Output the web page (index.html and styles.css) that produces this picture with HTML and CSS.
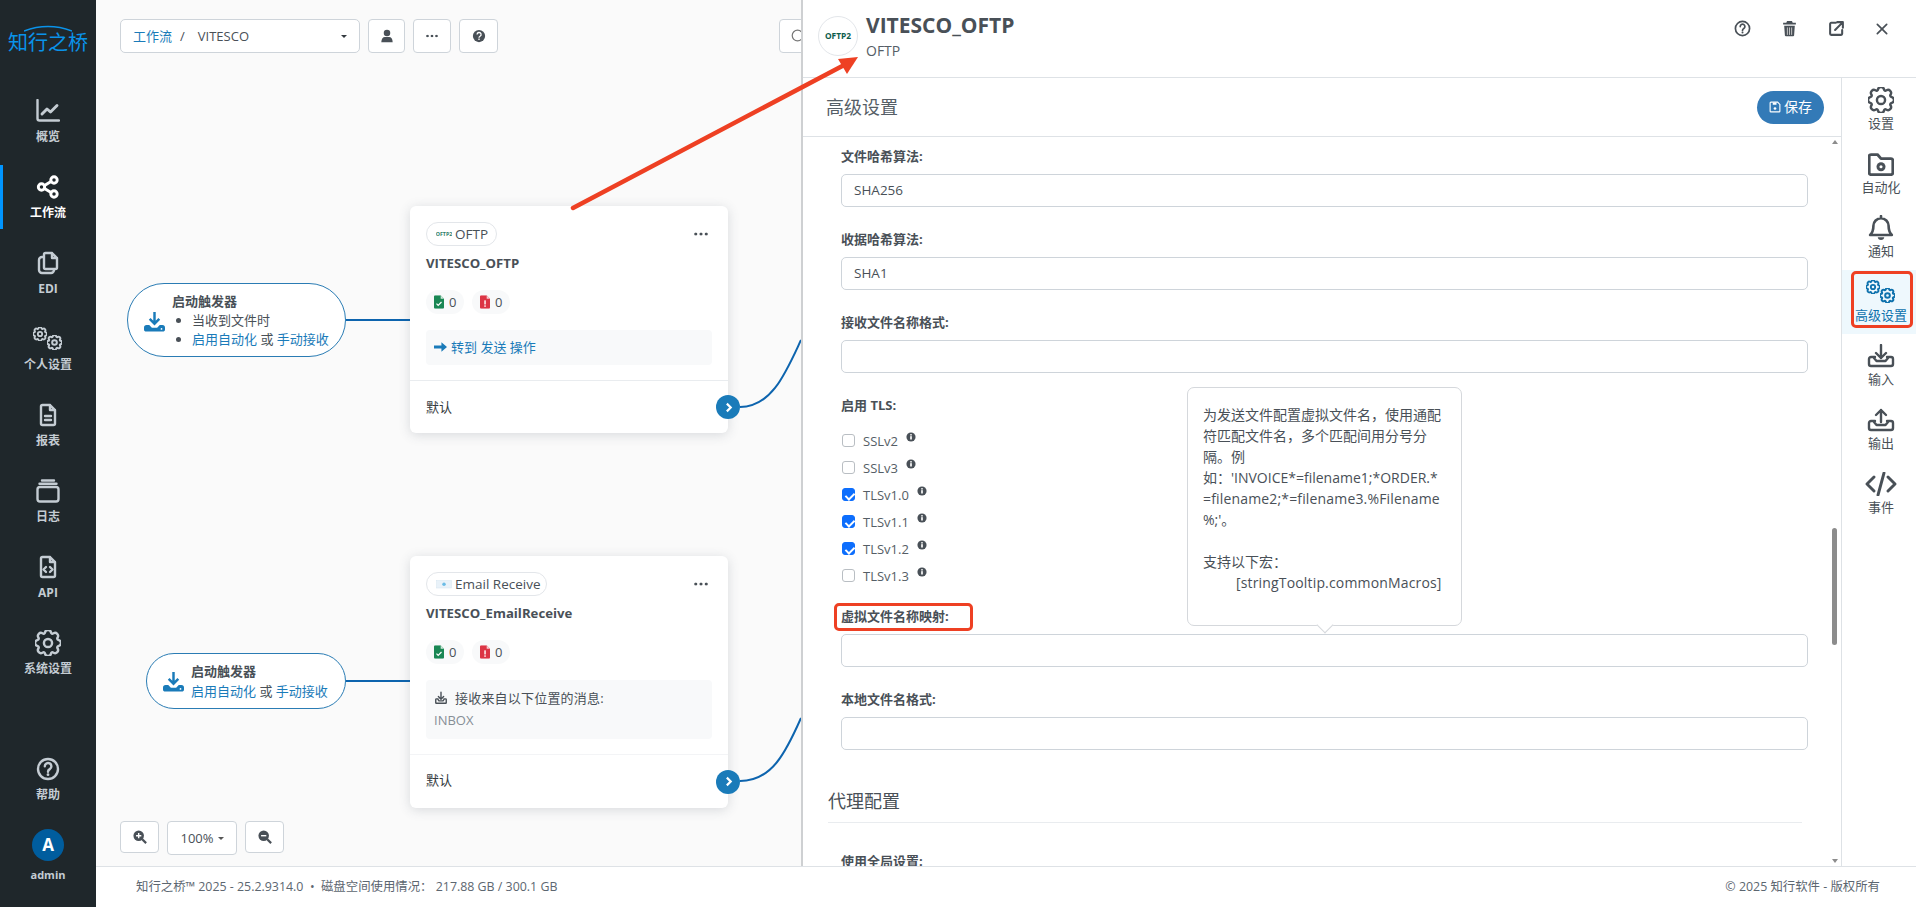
FILE: index.html
```html
<!DOCTYPE html>
<html lang="zh">
<head>
<meta charset="utf-8">
<title>工作流 - VITESCO</title>
<link rel="stylesheet" href="styles.css">
</head>
<body>
<svg class="defs" aria-hidden="true">
  <symbol id="gear" viewBox="0 0 16 16"><path class="st" d="M9.796 1.343c-.527-1.79-3.065-1.79-3.592 0l-.094.319a.873.873 0 0 1-1.255.52l-.292-.16c-1.64-.892-3.433.902-2.54 2.541l.159.292a.873.873 0 0 1-.52 1.255l-.319.094c-1.79.527-1.79 3.065 0 3.592l.319.094a.873.873 0 0 1 .52 1.255l-.16.292c-.892 1.64.901 3.434 2.541 2.54l.292-.159a.873.873 0 0 1 1.255.52l.094.319c.527 1.79 3.065 1.79 3.592 0l.094-.319a.873.873 0 0 1 1.255-.52l.292.16c1.64.893 3.434-.902 2.54-2.541l-.159-.292a.873.873 0 0 1 .52-1.255l.319-.094c1.79-.527 1.79-3.065 0-3.592l-.319-.094a.873.873 0 0 1-.52-1.255l.16-.292c.893-1.64-.902-3.433-2.541-2.54l-.292.159a.873.873 0 0 1-1.255-.52l-.094-.319z"/><circle class="st" cx="8" cy="8" r="2.5"/></symbol>
  <symbol id="gears" viewBox="0 0 32 25"><use href="#gear" x="1" y="1" width="14" height="14"/><use href="#gear" x="15" y="9" width="15" height="15"/></symbol>
  <symbol id="tray" viewBox="0 0 24 24"><path class="st2" d="M7 13.500H4.200A1.200 1.200 0 0 0 3 14.700V20a1 1 0 0 0 1 1h16a1 1 0 0 0 1-1v-5.300a1.200 1.200 0 0 0-1.200-1.200H17M6.500 14l2 3h7l2-3"/></symbol>
  <symbol id="tray-wide" viewBox="0 0 28 24"><path class="st2" d="M8 13H4a2 2 0 0 0-2 2v5a2 2 0 0 0 2 2h20a2 2 0 0 0 2-2v-5a2 2 0 0 0-2-2h-4M7 14l2.500 3h9l2.500-3"/></symbol>
  <symbol id="doc" viewBox="0 0 24 24"><path class="st2" d="M14 2H6.500A1.500 1.500 0 0 0 5 3.500v17A1.500 1.500 0 0 0 6.500 22h11a1.500 1.500 0 0 0 1.500-1.500V7zM14 2v5h5"/></symbol>
  <symbol id="q" viewBox="0 0 24 24"><circle class="st2" cx="12" cy="12" r="10"/><path class="st2" d="M8.800 9.300a3.300 3.300 0 1 1 5 2.800c-1.200.7-1.800 1.300-1.800 2.600"/><circle cx="12" cy="17.700" r="1.400" fill="currentColor"/></symbol>
  <symbol id="info" viewBox="0 0 12 12"><circle cx="6" cy="6" r="5.500" fill="#495057"/><rect x="5" y="5" width="2" height="4" fill="#fff"/><rect x="5" y="2.600" width="2" height="1.600" fill="#fff"/></symbol>
  <symbol id="trig" viewBox="0 0 24 24"><path d="M12 1v13M6.500 9l5.500 5.500L17.500 9" fill="none" stroke="currentColor" stroke-width="2.800"/><path d="M0 19c0-2 1-3 3-3h3l3 3h6l3-3h3c2 0 3 1 3 3v2c0 1.500-1 2.500-2.500 2.500h-19C1 23.500 0 22.500 0 21z" fill="currentColor"/><circle cx="20" cy="20.500" r="1" fill="#fff"/></symbol>
  <symbol id="okdoc" viewBox="0 0 12 16"><path d="M1.500 0H8l4 4v10.500a1.500 1.500 0 0 1-1.500 1.500h-9A1.500 1.500 0 0 1 0 14.500v-13A1.500 1.500 0 0 1 1.500 0z" fill="#1a8754"/><path d="M8 0v4h4" fill="#cfe8db"/><path d="M3 10l2 2 4-4" fill="none" stroke="#fff" stroke-width="1.500"/></symbol>
  <symbol id="errdoc" viewBox="0 0 12 16"><path d="M1.500 0H8l4 4v10.500a1.500 1.500 0 0 1-1.500 1.500h-9A1.500 1.500 0 0 1 0 14.500v-13A1.500 1.500 0 0 1 1.500 0z" fill="#dc3545"/><path d="M8 0v4h4" fill="#f6ccd0"/><rect x="5.200" y="6" width="1.700" height="5" fill="#fff"/><rect x="5.200" y="12" width="1.700" height="1.800" fill="#fff"/></symbol>
  <symbol id="dots" viewBox="0 0 16 4"><circle cx="2" cy="2" r="1.800" fill="currentColor"/><circle cx="8" cy="2" r="1.800" fill="currentColor"/><circle cx="14" cy="2" r="1.800" fill="currentColor"/></symbol>
</svg>

<aside class="sidebar">
  <div class="logo">
    <svg class="logo-arc" viewBox="0 0 48 7"><path d="M0 6Q24-3 48 6" fill="none" stroke="currentColor" stroke-width="1.600"/></svg>
    <span class="logo-text">知行之桥</span>
  </div>
  <nav class="nav">
    <a class="nav-item"><svg class="nav-ic" viewBox="0 0 24 24"><path class="st2" d="M1.500 1v18.500a2 2 0 0 0 2 2H23" /><path class="st3" d="M6 15l5-5 3.500 3L21 6.500"/></svg><span>概览</span></a>
    <a class="nav-item active"><svg class="nav-ic" viewBox="0 0 24 24"><g class="st3"><circle cx="5.500" cy="12" r="3.200"/><circle cx="18" cy="5" r="3.200"/><circle cx="18" cy="19" r="3.200"/><path d="M8.500 10.500l6.500-4M8.500 13.500l6.500 4"/></g></svg><span>工作流</span></a>
    <a class="nav-item"><svg class="nav-ic" viewBox="0 0 24 24"><path class="st2" d="M8 3.500A1.500 1.500 0 0 1 9.500 2H16l5 5v9.500a1.500 1.500 0 0 1-1.500 1.500h-10A1.500 1.500 0 0 1 8 16.500zM16 2v5h5M8 6H6a3 3 0 0 0-3 3v10a3 3 0 0 0 3 3h9a3 3 0 0 0 3-3v-1"/></svg><span>EDI</span></a>
    <a class="nav-item"><svg class="nav-ic wide" viewBox="0 0 32 25"><use href="#gears"/></svg><span>个人设置</span></a>
    <a class="nav-item"><svg class="nav-ic" viewBox="0 0 24 24"><use href="#doc"/><path class="st2" d="M9 13h6M9 17h6"/></svg><span>报表</span></a>
    <a class="nav-item"><svg class="nav-ic" viewBox="0 0 24 24"><rect class="st2" x="1.500" y="8" width="21" height="14.500" rx="2.500"/><path class="st2" d="M3.500 4.800h17M6 1.500h12"/></svg><span>日志</span></a>
    <a class="nav-item"><svg class="nav-ic" viewBox="0 0 24 24"><use href="#doc"/><path class="st2" d="M10 12l-2.500 2.500L10 17M14 12l2.500 2.500L14 17"/></svg><span>API</span></a>
    <a class="nav-item"><svg class="nav-ic solo-gear" viewBox="0 0 16 16"><use href="#gear"/></svg><span>系统设置</span></a>
  </nav>
  <div class="nav-bottom">
    <a class="nav-item"><svg class="nav-ic" viewBox="0 0 24 24"><use href="#q"/></svg><span>帮助</span></a>
    <div class="user"><span class="avatar">A</span><span class="user-name">admin</span></div>
  </div>
</aside>

<div class="main">
  <section class="canvas">
    <svg class="wires" viewBox="0 0 705 866">
      <path d="M250 320H314M250 681H314M644 407C676 407 690 372 705 340M644 781C676 781 690 752 705 718"/>
    </svg>

    <header class="toolbar">
      <div class="crumb"><a class="link">工作流</a><span class="sep">/</span><span>VITESCO</span><i class="caret"></i></div>
      <button class="tbtn w37"><svg class="ic16" viewBox="0 0 16 16"><circle cx="8" cy="4.500" r="3.700" fill="currentColor"/><path d="M1.500 15c0-4 2-6 4-6h5c2 0 4 2 4 6z" fill="currentColor"/></svg></button>
      <button class="tbtn w38"><svg class="ic-dots" viewBox="0 0 16 4"><use href="#dots"/></svg></button>
      <button class="tbtn w39"><svg class="ic16" viewBox="0 0 16 16"><circle cx="8" cy="8" r="7" fill="currentColor"/><path d="M5.800 6.300a2.300 2.300 0 1 1 3.400 2c-.8.500-1.200.8-1.200 1.700" fill="none" stroke="#fff" stroke-width="1.500"/><rect x="7.200" y="10.900" width="1.600" height="1.600" fill="#fff"/></svg></button>
      <div class="search"><svg class="search-ic" viewBox="0 0 16 16"><circle cx="7" cy="7" r="5.700" fill="none" stroke="currentColor" stroke-width="1.300"/><path d="M11.500 11.500L15 15" stroke="currentColor" stroke-width="1.300"/></svg></div>
    </header>

    <div class="zoombar">
      <button class="zbtn"><svg class="ic16" viewBox="0 0 16 16"><circle cx="6.500" cy="6.500" r="6" fill="currentColor"/><path d="M10.500 10.500L15 15" stroke="currentColor" stroke-width="2.500"/><path d="M3.500 6.500h6M6.500 3.500v6" stroke="#fff" stroke-width="1.600"/></svg></button>
      <button class="zbtn pct">100%<i class="caret small"></i></button>
      <button class="zbtn"><svg class="ic16" viewBox="0 0 16 16"><circle cx="6.500" cy="6.500" r="6" fill="currentColor"/><path d="M10.500 10.500L15 15" stroke="currentColor" stroke-width="2.500"/><path d="M3.500 6.500h6" stroke="#fff" stroke-width="1.600"/></svg></button>
    </div>

    <div class="trigger t1">
      <svg class="trig-ic" viewBox="0 0 24 24"><use href="#trig"/></svg>
      <div class="trig-body">
        <div class="trig-title">启动触发器</div>
        <ul class="trig-list">
          <li>当收到文件时</li>
          <li><a class="link">启用自动化</a> 或 <a class="link">手动接收</a></li>
        </ul>
      </div>
    </div>

    <div class="trigger t2">
      <svg class="trig-ic" viewBox="0 0 24 24"><use href="#trig"/></svg>
      <div class="trig-body">
        <div class="trig-title">启动触发器</div>
        <div class="trig-line"><a class="link">启用自动化</a> 或 <a class="link">手动接收</a></div>
      </div>
    </div>

    <article class="card c1">
      <div class="card-main">
        <div class="card-top">
          <span class="badge"><svg class="badge-ic" viewBox="0 0 24 10"><text x="12" y="7.500" text-anchor="middle" class="oftp-small">OFTP2</text></svg>OFTP</span>
          <svg class="card-dots" viewBox="0 0 16 4"><use href="#dots"/></svg>
        </div>
        <div class="card-title">VITESCO_OFTP</div>
        <div class="pills">
          <span class="pill"><svg class="pill-ic" viewBox="0 0 12 16"><use href="#okdoc"/></svg>0</span>
          <span class="pill"><svg class="pill-ic" viewBox="0 0 12 16"><use href="#errdoc"/></svg>0</span>
        </div>
        <div class="card-box goto"><svg class="goto-ic" viewBox="0 0 14 10"><path d="M0 3.500h8V0l6 5-6 5V6.500H0z" fill="currentColor"/></svg><a class="link">转到 发送 操作</a></div>
      </div>
      <div class="card-foot">默认<span class="port"><svg viewBox="0 0 10 10"><path d="M3.500 1.500L7 5l-3.500 3.500" fill="none" stroke="#fff" stroke-width="2"/></svg></span></div>
    </article>

    <article class="card c2">
      <div class="card-main">
        <div class="card-top">
          <span class="badge"><svg class="badge-ic" viewBox="0 0 24 14"><rect x="1" y="2" width="22" height="11" fill="#e9f2f9" stroke="#d4e4f0" stroke-width=".8"/><circle cx="12" cy="7.500" r="2.600" fill="#6bbce6"/></svg>Email Receive</span>
          <svg class="card-dots" viewBox="0 0 16 4"><use href="#dots"/></svg>
        </div>
        <div class="card-title">VITESCO_EmailReceive</div>
        <div class="pills">
          <span class="pill"><svg class="pill-ic" viewBox="0 0 12 16"><use href="#okdoc"/></svg>0</span>
          <span class="pill"><svg class="pill-ic" viewBox="0 0 12 16"><use href="#errdoc"/></svg>0</span>
        </div>
        <div class="card-box inbox">
          <div class="inbox-head"><svg class="inbox-ic" viewBox="0 0 24 24"><use href="#tray"/><path class="st2" d="M12 2v12M7.500 9.500L12 14l4.500-4.500"/></svg>接收来自以下位置的消息:</div>
          <div class="inbox-name">INBOX</div>
        </div>
      </div>
      <div class="card-foot">默认<span class="port"><svg viewBox="0 0 10 10"><path d="M3.500 1.500L7 5l-3.500 3.500" fill="none" stroke="#fff" stroke-width="2"/></svg></span></div>
    </article>
  </section>

  <footer class="footer">
    <span>知行之桥™ 2025 - 25.2.9314.0 &nbsp;•&nbsp; 磁盘空间使用情况： 217.88 GB / 300.1 GB</span>
    <span>© 2025 知行软件 - 版权所有</span>
  </footer>
</div>

<section class="panel">
  <header class="panel-head">
    <span class="panel-logo"><svg viewBox="0 0 30 12"><text x="15" y="9.500" text-anchor="middle" class="oftp-big">OFTP2</text></svg></span>
    <div class="panel-names">
      <h1>VITESCO_OFTP</h1>
      <p>OFTP</p>
    </div>
    <div class="panel-actions">
      <svg class="act" viewBox="0 0 24 24"><use href="#q"/></svg>
      <svg class="act" viewBox="0 0 24 24"><path d="M8.500 1.500h7l1 2.500H21v2.500H3V4h4.500z M4.500 8h15l-1 14a1.500 1.500 0 0 1-1.500 1H7a1.500 1.500 0 0 1-1.500-1z" fill="currentColor"/><path d="M9 10.500V21M12 10.500V21M15 10.500V21" stroke="#d8d8d8" stroke-width="1.200"/></svg>
      <svg class="act" viewBox="0 0 24 24"><path class="st3" d="M11 4H4.500A1.500 1.500 0 0 0 3 5.500v14A1.500 1.500 0 0 0 4.500 21h14a1.500 1.500 0 0 0 1.500-1.500V14M13 3h8v8M21 3L10 14"/></svg>
      <svg class="act x" viewBox="0 0 24 24"><path class="st3" d="M4 4l16 16M20 4L4 20"/></svg>
    </div>
  </header>
  <div class="panel-body">
    <div class="panel-content">
      <div class="section-head">
        <h2>高级设置</h2>
        <button class="save"><svg class="save-ic" viewBox="0 0 16 16"><path d="M2.500 1.500h9l3 3v9a1 1 0 0 1-1 1h-11a1 1 0 0 1-1-1v-11a1 1 0 0 1 1-1z" fill="none" stroke="#fff" stroke-width="1.500"/><rect x="5" y="2" width="5" height="3" fill="#fff"/><circle cx="8" cy="10" r="1.800" fill="#fff"/></svg>保存</button>
      </div>
      <div class="form-wrap">
        <form class="form">
          <label class="lbl">文件哈希算法:</label>
          <div class="input">SHA256</div>
          <label class="lbl">收据哈希算法:</label>
          <div class="input">SHA1</div>
          <label class="lbl">接收文件名称格式:</label>
          <div class="input"></div>
          <label class="lbl lbl-tls">启用 TLS:</label>
          <div class="checks">
            <label class="check"><input type="checkbox"><span>SSLv2</span><svg class="info" viewBox="0 0 12 12"><use href="#info"/></svg></label>
            <label class="check"><input type="checkbox"><span>SSLv3</span><svg class="info" viewBox="0 0 12 12"><use href="#info"/></svg></label>
            <label class="check"><input type="checkbox" checked><span>TLSv1.0</span><svg class="info" viewBox="0 0 12 12"><use href="#info"/></svg></label>
            <label class="check"><input type="checkbox" checked><span>TLSv1.1</span><svg class="info" viewBox="0 0 12 12"><use href="#info"/></svg></label>
            <label class="check"><input type="checkbox" checked><span>TLSv1.2</span><svg class="info" viewBox="0 0 12 12"><use href="#info"/></svg></label>
            <label class="check"><input type="checkbox"><span>TLSv1.3</span><svg class="info" viewBox="0 0 12 12"><use href="#info"/></svg></label>
          </div>
          <label class="lbl">虚拟文件名称映射:</label>
          <div class="input"></div>
          <label class="lbl">本地文件名格式:</label>
          <div class="input"></div>
          <h3 class="subhead">代理配置</h3>
          <label class="lbl lbl-last">使用全局设置:</label>
        </form>
        <div class="tooltip">为发送文件配置虚拟文件名，使用通配<br>符匹配文件名，多个匹配间用分号分<br>隔。例<br>如：'INVOICE*=filename1;*ORDER.*<br><span class="tip-wide">=filename2;*=filename3.%Filename</span><br>%;'。<br><br>支持以下宏：<br><span class="macro">[stringTooltip.commonMacros]</span></div>
        <div class="scrollbar"><i class="sb-up"></i><i class="sb-thumb"></i><i class="sb-down"></i></div>
      </div>
    </div>
    <nav class="rail">
      <a class="rail-item"><svg class="rail-ic solo-gear" viewBox="0 0 16 16"><use href="#gear"/></svg><span>设置</span></a>
      <a class="rail-item"><svg class="rail-ic folder" viewBox="1 2 22 20"><path class="st2" d="M2 5.500A1.500 1.500 0 0 1 3.500 4H9l3 3.500h8.500A1.500 1.500 0 0 1 22 9v10.500a1.500 1.500 0 0 1-1.500 1.500h-17A1.500 1.500 0 0 1 2 19.500z"/><circle cx="12" cy="14.300" r="3.800" fill="currentColor"/><circle cx="12" cy="14.300" r="1.300" fill="#fff"/></svg><span>自动化</span></a>
      <a class="rail-item"><svg class="rail-ic bell" viewBox="0 0 24 24"><path class="st2" d="M12 3a7 7 0 0 0-7 7c0 5-1.500 7-3 8.500h20C20.500 17 19 15 19 10a7 7 0 0 0-7-7zM12 3V1"/><path d="M9 20.500h6c0 1.500-1.300 2.500-3 2.500s-3-1-3-2.500z" fill="currentColor"/></svg><span>通知</span></a>
      <a class="rail-item active"><svg class="rail-ic wide" viewBox="0 0 32 25"><use href="#gears"/></svg><span>高级设置</span></a>
      <a class="rail-item"><svg class="rail-ic tray" viewBox="0 0 28 24"><use href="#tray-wide"/><path class="st2" d="M14 1v13M9 9l5 5 5-5"/></svg><span>输入</span></a>
      <a class="rail-item"><svg class="rail-ic tray" viewBox="0 0 28 24"><use href="#tray-wide"/><path class="st2" d="M14 14V2M9 7l5-5 5 5"/></svg><span>输出</span></a>
      <a class="rail-item"><svg class="rail-ic code" viewBox="0 0 32 24"><path class="st3" d="M9 5L2 12l7 7M23 5l7 7-7 7M19 1L13 23"/></svg><span>事件</span></a>
    </nav>
  </div>
</section>

<div class="mark mark-rail"></div>
<div class="mark mark-field"></div>
<svg class="arrow" viewBox="0 0 1916 907"><path d="M573 208L848 63" fill="none" stroke="#ee4023" stroke-width="4.500" stroke-linecap="round"/><path d="M858 57L838 59L847 74z" fill="#ee4023"/></svg>
</body>
</html>
```
FILE: styles.css
```css
* { box-sizing: border-box; }
html, body { margin: 0; height: 100%; }
body {
  display: flex;
  width: 1916px;
  height: 907px;
  overflow: hidden;
  position: relative;
  font-family: "Open Sans", "Noto Sans CJK SC", sans-serif;
  font-size: 13px;
  line-height: 18px;
  color: #495057;
  background: #fff;
}
a { text-decoration: none; color: inherit; }
h1, h2, h3, p { margin: 0; font-weight: normal; }
button { font: inherit; color: inherit; padding: 0; background: #fff; cursor: pointer; }
.defs { position: absolute; width: 0; height: 0; }
.st { fill: none; stroke: currentColor; stroke-width: var(--gw, 1.5); stroke-linejoin: round; }
.st2 { fill: none; stroke: currentColor; stroke-width: 2.400; stroke-linejoin: round; stroke-linecap: round; }
.st3 { fill: none; stroke: currentColor; stroke-width: 2.900; stroke-linejoin: round; stroke-linecap: round; }
.link { color: #1a7bb9; }

/* sidebar */
.sidebar {
  width: 96px;
  flex: none;
  background: #1f272b;
  display: flex;
  flex-direction: column;
  color: #c4ccd3;
}
.logo {
  height: 89px;
  position: relative;
  display: flex;
  justify-content: center;
  padding-top: 33px;
  color: #0a93ea;
}
.logo-text { font-size: 20px; line-height: 20px; letter-spacing: 0; }
.logo-arc { position: absolute; left: 24px; top: 25px; width: 48px; height: 7px; }
.nav { display: flex; flex-direction: column; gap: 12px; }
.nav-item {
  height: 64px;
  padding-top: 10px;
  display: flex;
  flex-direction: column;
  align-items: center;
  gap: 5px;
  font-size: 12px;
  font-weight: 700;
  line-height: 18px;
  position: relative;
}
.nav-item.active { color: #fff; box-shadow: inset 3px 0 0 #0095ff; }
.nav-ic { width: 24px; height: 24px; flex: none; }
.nav-ic.wide { width: 32px; height: 25px; margin-top: -1px; --gw: 2.100; }
.nav-ic.solo-gear, .rail-ic.solo-gear { width: 26px; height: 26px; margin: -1px 0; }
.nav-bottom { margin-top: auto; padding-bottom: 23px; display: flex; flex-direction: column; align-items: center; }
.nav-bottom .nav-item { align-self: stretch; }
.user { margin-top: 18px; display: flex; flex-direction: column; align-items: center; gap: 5px; }
.avatar {
  width: 32px; height: 32px; border-radius: 50%;
  background: #005d9e; color: #fff;
  font-weight: 700; font-size: 17px; line-height: 32px; text-align: center;
}
.user-name { font-size: 11px; font-weight: 700; line-height: 18px; }

/* main */
.main { flex: 1; display: flex; flex-direction: column; min-width: 0; }
.canvas {
  flex: 1;
  position: relative;
  background: #fafafa;
  padding: 19px 24px 11px;
  display: flex;
  flex-direction: column;
  overflow: hidden;
}
.wires { position: absolute; left: 0; top: 0; width: 705px; height: 866px; }
.wires path { fill: none; stroke: #0d64ae; stroke-width: 2; }
.toolbar { display: flex; gap: 8px; height: 34px; position: relative; }
.crumb {
  width: 240px;
  border: 1px solid #ced4da;
  border-radius: 5px;
  background: #fff;
  display: flex;
  align-items: center;
  padding: 0 12px;
  line-height: 30px;
  font-size: 13px;
}
.sep { margin: 0 13px 0 8px; }
.caret {
  margin-left: auto;
  border-top: 3px solid #343a40;
  border-left: 3px solid transparent;
  border-right: 3px solid transparent;
}
.caret.small { margin-left: 4px; border-width: 3px 3px 0; border-top-color: #555; display: inline-block; vertical-align: middle; }
.tbtn, .zbtn {
  border: 1px solid #ced4da;
  border-radius: 4px;
  display: flex;
  align-items: center;
  justify-content: center;
  color: #495057;
}
.w37 { width: 37px; } .w38 { width: 38px; } .w39 { width: 39px; }
.ic16 { width: 14px; height: 14px; }
.ic-dots { width: 12px; height: 4px; }
.search {
  width: 200px;
  margin-left: 273px;
  border: 1px solid #ced4da;
  border-radius: 4px;
  background: #fff;
  padding: 9px 0 0 11px;
  color: #777;
}
.search-ic { width: 15px; height: 15px; display: block; }
.zoombar { margin-top: auto; display: flex; gap: 8px; height: 34px; position: relative; align-items: flex-start; }
.zbtn { width: 39px; height: 32px; }
.zbtn.pct { width: 70px; height: 34px; font-size: 13px; gap: 0; }

/* canvas nodes */
.trigger {
  position: absolute;
  background: #fff;
  border: 1px solid #2a7cb4;
  border-radius: 40px;
  display: flex;
  align-items: center;
  color: #495057;
}
.t1 { left: 31px; top: 283px; width: 219px; height: 74px; padding-left: 16px; }
.t2 { left: 50px; top: 653px; width: 200px; height: 56px; padding-left: 16px; }
.trig-ic { width: 21px; height: 21px; color: #1a7bb9; flex: none; margin-right: 7px; margin-top: 2px; }
.t2 .trig-ic { margin-top: 0; }
.trig-title { font-weight: 700; line-height: 19px; color: #495057; }
.trig-list { margin: 0; padding: 0 0 0 20px; }
.trig-list li { line-height: 19px; }
.trig-line { line-height: 20px; }
.trig-body { font-size: 13px; }

.card {
  position: absolute;
  left: 314px;
  width: 318px;
  background: #fff;
  border-radius: 6px;
  box-shadow: 0 2px 12px rgba(60, 70, 90, .18);
  display: flex;
  flex-direction: column;
}
.c1 { top: 206px; height: 227px; }
.c2 { top: 556px; height: 252px; }
.card-main { padding: 16px 16px 15px; border-bottom: 1px solid #e9ecef; }
.c2 .card-main { border-bottom-color: #f3f4f6; }
.card-top { display: flex; justify-content: space-between; align-items: center; height: 24px; }
.badge {
  display: inline-flex;
  align-items: center;
  height: 24px;
  padding: 0 8px 0 9px;
  border: 1px solid #e3e6ea;
  border-radius: 12px;
  font-size: 13.500px;
  line-height: 22px;
  color: #495057;
  gap: 3px;
}
.c2 .badge { padding-right: 5px; }
.badge-ic { width: 16px; height: 10px; }
.oftp-small { font: 700 8px "Open Sans", sans-serif; fill: #2c7d68; }
.oftp-big { font: 700 9px "Open Sans", sans-serif; fill: #0d5c4c; }
.card-dots { width: 14px; height: 4px; color: #495057; margin-right: 4px; }
.card-title { font-weight: 700; font-size: 13.200px; line-height: 18px; margin-top: 8px; color: #495057; }
.pills { display: flex; gap: 8px; margin-top: 18px; }
.pill {
  width: 38px; height: 24px;
  border-radius: 12px;
  background: #f8f9fa;
  display: flex; align-items: center;
  padding-left: 8px;
  gap: 5px;
  font-size: 13px;
}
.pill-ic { width: 10px; height: 14px; }
.card-box { background: #f8f9fa; border-radius: 4px; margin-top: 16px; padding: 0 8px; }
.goto { height: 35px; display: flex; align-items: center; gap: 4px; color: #1a7bb9; padding-bottom: 1px; }
.goto-ic { width: 13px; height: 10px; }
.inbox { height: 59px; padding-top: 8px; }
.inbox-head { display: flex; align-items: center; gap: 7px; line-height: 20px; letter-spacing: .2px; }
.inbox-ic { width: 14px; height: 14px; }
.inbox-name { color: #868e96; line-height: 20px; margin-top: 2px; font-size: 13px; }
.card-foot { flex: 1; padding-left: 16px; display: flex; align-items: center; position: relative; color: #343a40; }
.c2 .card-foot { padding-bottom: 3px; }
.port {
  position: absolute;
  right: -12px; top: 50%;
  margin-top: -12px;
  width: 24px; height: 24px;
  border-radius: 50%;
  background: #1a7bb9;
  display: flex; align-items: center; justify-content: center;
}
.port svg { width: 11px; height: 11px; }

/* footer */
.footer {
  height: 41px;
  flex: none;
  border-top: 1px solid #dee2e6;
  background: #fff;
  display: flex;
  justify-content: space-between;
  align-items: center;
  padding: 0 36px 0 40px;
  font-size: 12.400px;
  color: #5c6670;
}

/* panel drawer */
.panel {
  position: absolute;
  left: 801px; top: 0; right: 0; bottom: 41px;
  background: #fff;
  border-left: 2px solid #ced0d2;
  display: flex;
  flex-direction: column;
}
.panel-head {
  height: 78px;
  flex: none;
  border-bottom: 1px solid #dee2e6;
  display: flex;
  align-items: flex-start;
  padding: 16px 0 0 15px;
}
.panel-logo {
  width: 40px; height: 40px;
  border: 1px solid #e3e6ea;
  border-radius: 50%;
  display: flex; align-items: center; justify-content: center;
  flex: none;
}
.panel-logo svg { width: 28px; height: 12px; }
.panel-names { margin-left: 8px; margin-top: -4px; }
.panel-names h1 { font-size: 21px; font-weight: 700; line-height: 26px; color: #495057; }
.panel-names p { font-size: 14px; line-height: 20px; margin-top: 3px; color: #555e66; }
.panel-actions { margin-left: auto; display: flex; gap: 30px; padding: 4px 27px 0 0; color: #495057; }
.act { width: 17px; height: 17px; }
.act.x { width: 14px; height: 14px; margin-top: 2px; }
.panel-body { flex: 1; display: flex; min-height: 0; }
.panel-content { flex: 1; display: flex; flex-direction: column; min-width: 0; }
.section-head {
  height: 59px;
  flex: none;
  border-bottom: 1px solid #dee2e6;
  display: flex;
  align-items: center;
  justify-content: space-between;
  padding: 0 17px 0 23px;
}
.section-head h2 { font-size: 18px; line-height: 26px; color: #555e66; }
.save {
  width: 67px; height: 33px;
  border: 0;
  border-radius: 17px;
  background: #337ab7;
  color: #fff;
  font-size: 14px;
  display: flex; align-items: center; justify-content: center;
  gap: 3px;
}
.save-ic { width: 12px; height: 12px; }
.form-wrap { flex: 1; position: relative; overflow: hidden; }
.form { padding: 10px 33px 0 38px; }
.lbl { display: block; font-size: 13px; font-weight: 700; line-height: 18px; margin-bottom: 9px; color: #495057; }
.lbl-last { line-height: 14px; margin-bottom: 0; }
.input {
  height: 33px;
  border: 1px solid #ced4da;
  border-radius: 5px;
  padding: 0 12px;
  margin-bottom: 23px;
  font-size: 13.500px;
  line-height: 30px;
  color: #495057;
}
.lbl-tls { margin-bottom: 13px; }
.checks { margin-bottom: 18px; }
.check { display: flex; align-items: center; height: 27px; font-size: 13px; color: #555e66; }
.check input {
  appearance: none;
  width: 13px; height: 13px;
  margin: 0 8px 0 1px;
  border: 1px solid #b9bec3;
  border-radius: 3px;
  background: #fff;
  position: relative;
  flex: none;
}
.check input:checked { background: #0d6efd; border-color: #0d6efd; }
.check input:checked::after {
  content: "";
  position: absolute;
  left: 3.500px; top: 1.500px;
  width: 4px; height: 7px;
  border: solid #fff;
  border-width: 0 2px 2px 0;
  transform: rotate(45deg);
}
.info { width: 10px; height: 10px; margin: -8px 0 0 8px; }
.subhead {
  margin: 37px 6px 31px -13px;
  padding-bottom: 7px;
  border-bottom: 1px solid #e9ecef;
  font-size: 18px;
  line-height: 28px;
  color: #495057;
}
.tooltip {
  position: absolute;
  left: 384px; top: 250px;
  width: 275px; height: 239px;
  background: #fff;
  border: 1px solid #d5d8dc;
  border-radius: 7px;
  padding: 16px 15px;
  font-size: 14px;
  line-height: 21px;
  color: #495057;
  white-space: nowrap;
}
.tooltip::after {
  content: "";
  position: absolute;
  left: 131px; bottom: -6px;
  width: 11px; height: 11px;
  background: #fff;
  border: solid #d5d8dc;
  border-width: 0 1px 1px 0;
  transform: rotate(45deg);
}
.tip-wide { letter-spacing: .16px; }
.macro { padding-left: 33px; letter-spacing: .16px; }
.scrollbar { position: absolute; right: 0; top: 0; bottom: 0; width: 12px; }
.scrollbar i { position: absolute; display: block; }
.sb-up, .sb-down { left: 3px; border-left: 3px solid transparent; border-right: 3px solid transparent; }
.sb-up { top: 3px; border-bottom: 4px solid #8c8c8c; }
.sb-down { bottom: 3px; border-top: 4px solid #8c8c8c; }
.sb-thumb { left: 3px; width: 5px; top: 391px; height: 117px; background: #8c8c8c; border-radius: 3px; }

/* rail */
.rail {
  width: 75px;
  flex: none;
  border-left: 1px solid #dee2e6;
  display: flex;
  flex-direction: column;
}
.rail-item {
  height: 64px;
  padding: 10px 0 0 4px;
  display: flex;
  flex-direction: column;
  align-items: center;
  gap: 2px;
  font-size: 13px;
  line-height: 18px;
  color: #495057;
}
.rail-ic { width: 24px; height: 24px; flex: none; }
.rail-ic.wide { width: 32px; height: 25px; margin-top: -1px; --gw: 2.100; }
.rail-ic.code { width: 32px; height: 24px; }
.rail-ic.folder { width: 26px; height: 24px; }
.rail-ic.bell { width: 26px; height: 26px; margin: -1px 0 -1px; }
.rail-ic.tray { width: 28px; height: 24px; }
.rail-item.active { background: #eef8fd; color: #0f72ad; }

/* annotations */
.mark { position: absolute; border: 3px solid #ee4023; border-radius: 5px; }
.mark-rail { left: 1851px; top: 271px; width: 62px; height: 57px; }
.mark-field { left: 834px; top: 603px; width: 139px; height: 28px; }
.arrow { position: absolute; left: 0; top: 0; width: 1916px; height: 907px; pointer-events: none; }
```
